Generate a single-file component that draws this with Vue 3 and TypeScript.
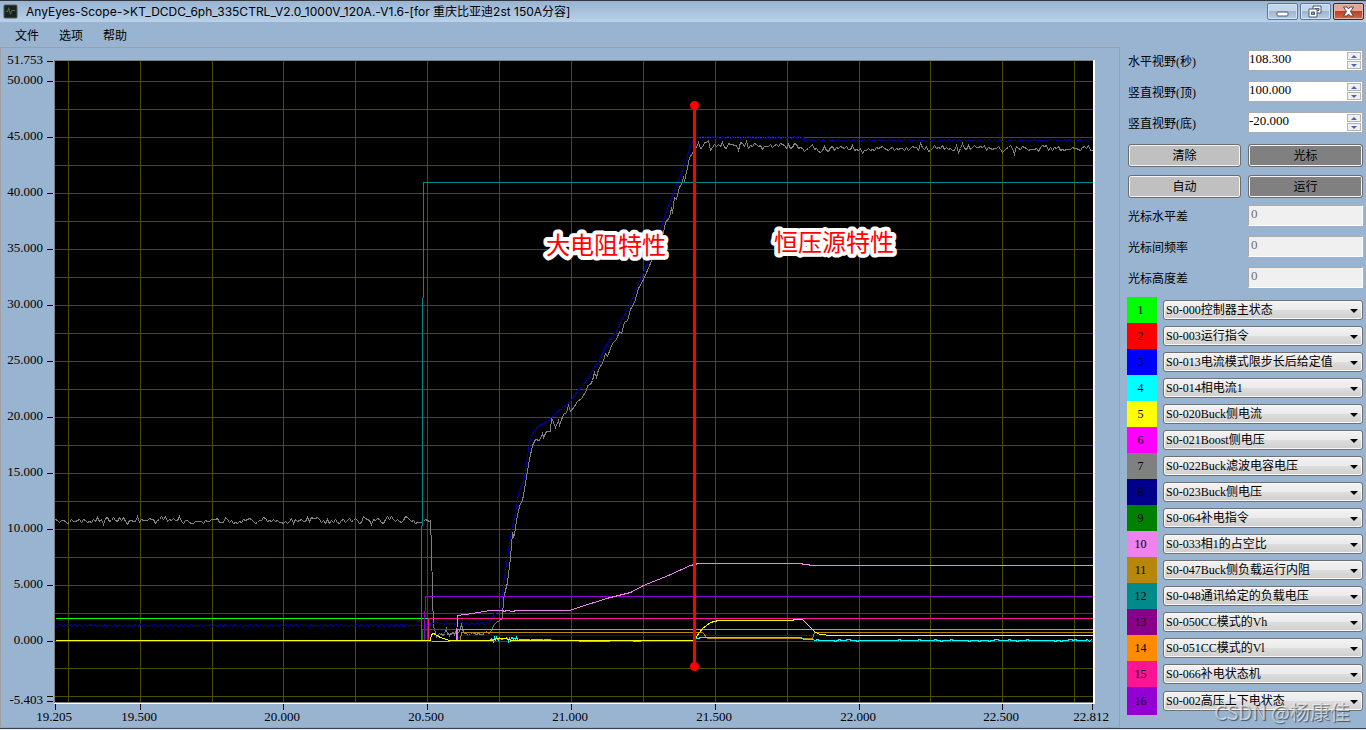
<script setup lang="ts">
import { ref } from 'vue'

type Point = [number, number]

interface Channel {
  id: number
  color: string
  signal: string
}

interface Trace {
  name: string
  color: string
  path: string
}

const channels = ref<Channel[]>([
  { id: 1, color: '#00ff00', signal: 'S0-000控制器主状态' },
  { id: 2, color: '#ff0000', signal: 'S0-003运行指令' },
  { id: 3, color: '#0000ff', signal: 'S0-013电流模式限步长后给定值' },
  { id: 4, color: '#00ffff', signal: 'S0-014相电流1' },
  { id: 5, color: '#ffff00', signal: 'S0-020Buck侧电流' },
  { id: 6, color: '#ff00ff', signal: 'S0-021Boost侧电压' },
  { id: 7, color: '#808080', signal: 'S0-022Buck滤波电容电压' },
  { id: 8, color: '#00008b', signal: 'S0-023Buck侧电压' },
  { id: 9, color: '#008000', signal: 'S0-064补电指令' },
  { id: 10, color: '#ee82ee', signal: 'S0-033相1的占空比' },
  { id: 11, color: '#b8860b', signal: 'S0-047Buck侧负载运行内阻' },
  { id: 12, color: '#008b8b', signal: 'S0-048通讯给定的负载电压' },
  { id: 13, color: '#8b008b', signal: 'S0-050CC模式的Vh' },
  { id: 14, color: '#ff8c00', signal: 'S0-051CC模式的Vl' },
  { id: 15, color: '#ff1493', signal: 'S0-066补电状态机' },
  { id: 16, color: '#9400d3', signal: 'S0-002高压上下电状态' },
])
const signals = channels.value.map((c) => c.signal)

const ranges = ref([
  { id: 'span', label: '水平视野(秒)', value: '108.300' },
  { id: 'top', label: '竖直视野(顶)', value: '100.000' },
  { id: 'bottom', label: '竖直视野(底)', value: '-20.000' },
])
const readouts = [
  { id: 'dx', label: '光标水平差', value: '0' },
  { id: 'freq', label: '光标间频率', value: '0' },
  { id: 'dy', label: '光标高度差', value: '0' },
]
const actions = ref([
  { name: '清除', on: false },
  { name: '光标', on: true },
  { name: '自动', on: false },
  { name: '运行', on: true },
])

function step(index: number, delta: number) {
  const row = ranges.value[index]
  row.value = (Number(row.value) + delta).toFixed(3)
}

const gridX = [68, 140, 212, 283, 355, 427, 499, 571, 643, 715, 787, 859, 930, 1002, 1074]
const gridY = [81, 109, 137, 165, 193, 221, 249, 277, 305, 333, 361, 389, 417, 445, 473, 501, 529, 557, 585, 613, 641, 668, 696]

const yTicks = [
  { y: 61, text: '51.753' },
  ...Array.from({ length: 11 }, (_, i) => ({ y: 81 + i * 56, text: (50 - i * 5).toFixed(3) })),
  { y: 701, text: '-5.403' },
]
const xTicks = [
  { x: 55, text: '19.205' },
  { x: 140, text: '19.500' },
  { x: 283, text: '20.000' },
  { x: 427, text: '20.500' },
  { x: 571, text: '21.000' },
  { x: 715, text: '21.500' },
  { x: 859, text: '22.000' },
  { x: 1002, text: '22.500' },
  { x: 1092, text: '22.812' },
]

let seed = 7
function random() {
  seed = (seed * 16807) % 2147483647
  return seed / 2147483647
}

function noise(from: number, to: number, level: number, amp: number, stepX = 1, spike = 0): Point[] {
  const out: Point[] = []
  for (let x = from; x <= to; x += stepX) {
    const r = (random() + random() + random() - 1.5) / 1.5
    const extra = spike && random() > 0.975 ? (random() > 0.4 ? -spike : spike) : 0
    out.push([x, Math.round(level + r * amp + extra)])
  }
  return out
}

function ripple(from: number, to: number, level: number): Point[] {
  const out: Point[] = []
  for (let x = from; x <= to; x++) {
    out.push([x, Math.round(level + Math.sin(x * 1.25) + (random() - 0.5))])
  }
  return out
}

const line = (points: Point[]) => 'M' + points.map((p) => p.join(' ')).join('L')

const traces: Trace[] = [
  { name: 'grey', color: '#808080', path: line([
    ...noise(55, 429, 520, 5, 2, 4), [430, 520], [431, 549], [432, 592], [433, 627], [434, 628],
    ...noise(436, 444, 635, 4), [446, 628], [447, 634],
    ...noise(448, 459, 634, 4), [461, 624], [463, 632],
    ...noise(464, 490, 633, 3, 2), [493, 625], [496, 622], [502, 618], [503, 598], [507, 582], [510, 557],
    [512, 532], [513, 536], [514, 534], [517, 514], [520, 503], [522, 500], [525, 483], [528, 464],
    [532, 445], [535, 439], [539, 440], [542, 433], [543, 437], [546, 431], [550, 431], [551, 417],
    [555, 427], [558, 420], [559, 425], [563, 414], [566, 412], [568, 405], [570, 411], [574, 406],
    [577, 401], [581, 398], [586, 390], [587, 385], [590, 384], [592, 380], [594, 372], [596, 377],
    [598, 369], [603, 361], [605, 353], [607, 356], [612, 343], [616, 339], [619, 331], [621, 333],
    [624, 322], [627, 320], [630, 309], [634, 302], [638, 288], [643, 279], [647, 270], [652, 258],
    [657, 247], [663, 232], [665, 222], [669, 217], [671, 207], [672, 213], [674, 197], [676, 199],
    [679, 187], [682, 182], [683, 176], [684, 181], [687, 167], [689, 157], [694, 150], [697, 145],
    ...noise(698, 803, 145, 6, 2, 3), ...noise(804, 1092, 148, 5, 2, 4),
  ]) },
  { name: 'navy', color: '#0000a0', path: line([
    ...ripple(55, 430, 625), ...ripple(431, 488, 623), [490, 621], [493, 614], [497, 611], [501, 606],
    [503, 583], [507, 557], [511, 530], [515, 513], [518, 493], [523, 482], [526, 463], [529, 442],
    [532, 433], [537, 426], [547, 421], [553, 415], [562, 407], [570, 401], [577, 391], [587, 379],
    [592, 370], [600, 357], [608, 341], [616, 331], [622, 318], [629, 305], [635, 290], [641, 277],
    [648, 260], [655, 241], [662, 223], [667, 208], [673, 192], [680, 175], [685, 162], [691, 143],
    [694, 139], ...ripple(696, 803, 137), ...ripple(804, 1092, 140),
  ]) },
  { name: 'lime', color: '#00ff00', path: 'M55 618H428' },
  { name: 'teal', color: '#008b8b', path: 'M421 640V526L422 525V298L423 297V182H1092' },
  { name: 'green', color: '#008000', path: 'M422 640V629H458' },
  { name: 'purple', color: '#9400d3', path: 'M55 641H424V611L425 610V596H1092' },
  { name: 'pink', color: '#ff1493', path: 'M428 640V618H1092' },
  { name: 'blue', color: '#0000ff', path: 'M457 641L460 635H1092' },
  { name: 'gold', color: '#b8860b', path: 'M460 640L461 632H702L707 638H812L814 632H1092' },
  { name: 'orange', color: '#ff8c00', path: 'M457 640V629H1092' },
  { name: 'violet', color: '#ee82ee', path: 'M456 640L457 615L465 614L490 610H502L504 611L506 610L512 611L516 610H569L578 607L606 598L630 592L643 585L668 575L690 565L698 563H801L803 564H808L810 565H1092' },
  { name: 'cyan', color: '#00ffff', path: 'M431 641H449M' + line([
    ...noise(489, 516, 639, 4), ...noise(517, 550, 639, 1),
  ]).slice(1) + 'M578 641H609M632 641H640M695 638H699V637H800L804 639H813L814 640L' + line(noise(815, 1092, 640, 1, 2)).slice(1) },
  { name: 'yellow', color: '#ffff00', path: 'M55 640H430L431 634L433 633L440 637L449 640H491L497 638H505L511 640H694L696 636L702 628L710 622L718 620H792L794 619H802L810 627L815 632L820 634L831 635H1092' },
]

const notes = [
  { x: 546, y: 254, text: '大电阻特性' },
  { x: 774, y: 251, text: '恒压源特性' },
]
</script>

<template>
  <div class="window">
    <header class="titlebar">
      <svg class="app-icon" viewBox="0 0 16 16" aria-hidden="true">
        <rect x="1" y="1" width="14" height="14" rx="1" fill="#18221f" stroke="#59686c" />
        <path d="M3 8H5L6 4L8 11L9 7H13" fill="none" stroke="#47745e" />
      </svg>
      <h1>AnyEyes-Scope-&gt;KT_DCDC_6ph_335CTRL_V2.0_1000V_120A.-V1.6-[for 重庆比亚迪2st 150A分容]</h1>
      <div class="window-buttons">
        <button type="button" aria-label="最小化">
          <svg viewBox="0 0 31 17"><rect x="10" y="9" width="11" height="4" rx="1" fill="#fff" stroke="#50596a" /></svg>
        </button>
        <button type="button" aria-label="还原">
          <svg viewBox="0 0 31 17">
            <path d="M13 3h8v7h-8zM15 5.500h4v2h-4z" fill="#fff" stroke="#50596a" fill-rule="evenodd" />
            <path d="M9 6h8v8h-8zM11.500 9h3v2.500h-3z" fill="#fff" stroke="#50596a" fill-rule="evenodd" />
          </svg>
        </button>
        <button type="button" class="close" aria-label="关闭">
          <svg viewBox="0 0 31 17"><path d="M10.500 4h3.500l1.500 2 1.500-2h3.500l-3 4.500 3 4.500h-3.500l-1.500-2-1.500 2h-3.500l3-4.500z" fill="#fff" stroke="#55464f" /></svg>
        </button>
      </div>
    </header>

    <nav class="menu">
      <button type="button">文件</button>
      <button type="button">选项</button>
      <button type="button">帮助</button>
    </nav>

    <main class="content">
      <section class="scope">
        <svg class="chart" viewBox="1 48 1118 679" role="img" aria-label="示波器波形">
          <rect x="54" y="60" width="1041" height="644" fill="#fff" />
          <rect x="54" y="60" width="1039" height="643" fill="#808080" />
          <rect x="55" y="61" width="1038" height="641" fill="#000" />
          <g fill="#4d4d00">
            <rect v-for="x in gridX" :key="'x' + x" :x="x" y="61" width="1" height="641" />
            <rect v-for="y in gridY" :key="'y' + y" x="55" :y="y" width="1038" height="1" />
          </g>
          <g class="traces" transform="translate(0.5 0.5)">
            <path v-for="t in traces" :key="t.name" :d="t.path" :stroke="t.color" />
          </g>
          <g class="axis">
            <template v-for="t in yTicks" :key="t.text">
              <rect x="47" :y="t.y" width="6" height="1" />
              <text x="43" :y="t.y + 3" text-anchor="end">{{ t.text }}</text>
            </template>
            <rect x="47" y="696" width="6" height="1" />
            <template v-for="t in xTicks" :key="t.text">
              <rect :x="t.x" y="704" width="1" height="6" />
              <text :x="t.x - 1" y="721" text-anchor="middle">{{ t.text }}</text>
            </template>
          </g>
          <g class="marker">
            <rect x="693" y="105" width="3" height="562" />
            <circle cx="694.500" cy="105.500" r="4.500" />
            <circle cx="694.500" cy="666.500" r="4.500" />
          </g>
          <g class="notes">
            <text v-for="n in notes" :key="n.text" :x="n.x" :y="n.y">{{ n.text }}</text>
          </g>
        </svg>
      </section>

      <aside class="side">
        <form class="controls" @submit.prevent>
          <template v-for="(r, i) in ranges" :key="r.id">
            <label :for="r.id">{{ r.label }}</label>
            <div class="spin">
              <input :id="r.id" v-model="r.value" type="text" inputmode="decimal" />
              <div class="arrows">
                <button type="button" aria-label="增加" @click="step(i, 1)">
                  <svg viewBox="0 0 6 3"><path d="M0 3L3 0L6 3z" /></svg>
                </button>
                <button type="button" aria-label="减少" @click="step(i, -1)">
                  <svg viewBox="0 0 6 3"><path d="M0 0L3 3L6 0z" /></svg>
                </button>
              </div>
            </div>
          </template>
          <button
            v-for="a in actions"
            :key="a.name"
            type="button"
            class="action"
            :class="{ on: a.on }"
            @click="a.on = !a.on"
          >{{ a.name }}</button>
          <template v-for="r in readouts" :key="r.id">
            <label :for="r.id">{{ r.label }}</label>
            <input :id="r.id" class="readout" type="text" :value="r.value" disabled />
          </template>
        </form>

        <ul class="channels">
          <li v-for="c in channels" :key="c.id">
            <label :for="'ch' + c.id" :style="{ background: c.color }">{{ c.id }}</label>
            <div class="combo">
              <select :id="'ch' + c.id" v-model="c.signal">
                <option v-for="s in signals" :key="s" :value="s">{{ s }}</option>
              </select>
            </div>
          </li>
        </ul>
      </aside>
    </main>
    <div class="watermark">CSDN @杨康佳</div>
  </div>
</template>

<style>
body {
  background: #e3ebf3;
}
</style>

<style scoped>
.window {
  position: relative;
  box-sizing: border-box;
  border-top: 1px solid #35383f;
  border-bottom: 1px solid #3b4654;
  background: #99b4d1;
  color: #000;
  font: 12px/16px "Liberation Serif", "Noto Sans CJK SC", serif;
}

.window * {
  box-sizing: border-box;
}

button,
input,
select {
  margin: 0;
  padding: 0;
  font: inherit;
  color: inherit;
}

.titlebar {
  display: flex;
  align-items: center;
  height: 21px;
  padding: 0 2px 0 3px;
  background: linear-gradient(#98b4d2, #b9d1ea);
}

.app-icon {
  width: 15px;
  height: 15px;
}

h1 {
  flex: 1;
  margin: 0 0 0 8px;
  font: 12px/20px Inter, "Noto Sans CJK SC", sans-serif;
  font-variant-ligatures: none;
  font-feature-settings: "calt" 0;
  white-space: nowrap;
}

.window-buttons {
  display: flex;
  gap: 2px;
}

.window-buttons button {
  width: 31px;
  height: 17px;
  border: 1px solid #5f7894;
  border-radius: 2px;
  background: linear-gradient(#c3d5e8 45%, #9db6d1 50%, #b7cee6);
  box-shadow: inset 0 0 0 1px #d3e2f1;
}

.window-buttons .close {
  border-color: #5a1a1e;
  background: linear-gradient(#e5a597 45%, #bd3f27 50%, #d3694a);
  box-shadow: inset 0 0 0 1px #e8b3a6;
}

.window-buttons svg {
  display: block;
  width: 31px;
  height: 17px;
  margin: -1px;
}

.menu {
  display: flex;
  height: 25px;
  padding-left: 15px;
  gap: 20px;
}

.menu button {
  border: 0;
  background: none;
  font-family: "Noto Sans CJK SC", sans-serif;
}

.content {
  display: flex;
  align-items: stretch;
}

.scope {
  flex: 1;
  min-width: 0;
  border: 1px solid #a0a0a0;
}

.chart {
  display: block;
  width: 100%;
}

.traces path {
  fill: none;
  stroke-width: 1;
  shape-rendering: crispEdges;
}

.axis text {
  font-size: 13px;
}

.marker {
  fill: #f00;
}

.notes text {
  font: 24px "Noto Sans CJK SC", sans-serif;
  fill: #f00;
  stroke: #fff;
  stroke-width: 8px;
  stroke-linejoin: round;
  paint-order: stroke;
}

.side {
  width: 246px;
  padding: 3px 3px 0 7px;
}

.controls {
  display: grid;
  grid-template-columns: 113px minmax(0, 1fr);
  grid-auto-rows: 21px;
  gap: 10px 7px;
  padding-left: 1px;
}

.controls label {
  line-height: 25px;
}

.spin {
  display: flex;
  border: 1px solid #abadb3;
  background: #fff;
}

.spin input {
  flex: 1;
  min-width: 0;
  height: 15px;
  border: 0;
  outline: 0;
  background: none;
  font-size: 13px;
}

.arrows {
  display: flex;
  flex-direction: column;
  gap: 1px;
  width: 15px;
  padding: 1px 1px 1px 0;
}

.arrows button {
  display: flex;
  align-items: center;
  justify-content: center;
  flex: 1;
  min-height: 0;
  border: 1px solid #b4b4b8;
  background: #f0f0f0;
}

.arrows svg {
  width: 6px;
  height: 3px;
  fill: #4a63b4;
}

.action {
  height: 23px;
  margin-top: 1px;
  border: 1px solid #6d6d6d;
  border-radius: 3px;
  background: #c0c0c0;
  box-shadow: inset 0 0 0 1px #f4f4f4;
}

.action.on {
  background: #808080;
}

.readout {
  width: 100%;
  min-width: 0;
  padding: 0 0 3px 2px;
  border: 1px solid;
  border-color: #aaa #fff #fff #aaa;
  background: #f0f0f0;
  color: #6d6d6d;
  font-size: 13px;
}

.channels {
  margin: 9px 0 0;
  padding: 0;
  list-style: none;
}

.channels li {
  display: flex;
  align-items: center;
  gap: 6px;
  height: 26px;
}

.channels li:last-child {
  height: 28px;
}

.channels label {
  display: flex;
  align-items: center;
  justify-content: center;
  align-self: stretch;
  width: 30px;
  padding-right: 3px;
}

.combo {
  position: relative;
  flex: 1;
}

.combo select {
  display: block;
  appearance: none;
  width: 100%;
  height: 20px;
  padding: 0 18px 0 2px;
  border: 1px solid #707070;
  border-radius: 3px;
  background: linear-gradient(#f2f2f2, #ebebeb 50%, #dddddd 50%, #cfcfcf);
  box-shadow: inset 0 0 0 1px #fafafa;
}

.combo::after {
  content: "";
  position: absolute;
  top: 9px;
  right: 5px;
  border: 4px solid transparent;
  border-top-color: #000;
  border-bottom: 0;
  pointer-events: none;
}

.watermark {
  position: absolute;
  right: 16px;
  bottom: 2px;
  color: #ffffff99;
  font: 20px/28px "Noto Sans CJK SC", sans-serif;
  text-shadow: 1px 1px 1px #00000088;
  pointer-events: none;
}
</style>
